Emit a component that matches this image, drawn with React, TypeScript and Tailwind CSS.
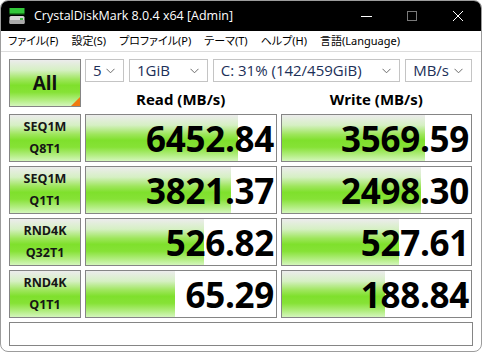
import React from "react";

type Row = { name: [string, string]; read: number; write: number };

const ROWS: Row[] = [
  { name: ["SEQ1M", "Q8T1"], read: 6452.84, write: 3569.59 },
  { name: ["SEQ1M", "Q1T1"], read: 3821.37, write: 2498.3 },
  { name: ["RND4K", "Q32T1"], read: 526.82, write: 527.61 },
  { name: ["RND4K", "Q1T1"], read: 65.29, write: 188.84 },
];

const MENU = ["ファイル(F)", "設定(S)", "プロファイル(P)", "テーマ(T)", "ヘルプ(H)", "言語(Language)"];

const GREEN =
  "linear-gradient(to bottom, #ececec 0%, #d6f0c4 22%, #9ee65c 42%, #7fe02c 55%, #86e236 70%, #b4ee84 88%, #d4f6bc 100%)";

// log scale like CDM: 0.1 .. 100000 MB/s
const ratio = (v: number) => Math.max(0, Math.min(1, (Math.log10(v) + 1) / 6));

function Chevron() {
  return (
    <svg width="9" height="6" viewBox="0 0 9 6" className="shrink-0">
      <path d="M0.5 0.8 L4.5 4.8 L8.5 0.8" fill="none" stroke="#6b6b6b" strokeWidth="1" />
    </svg>
  );
}

function Combo({ label, className }: { label: string; className: string }) {
  return (
    <div
      className={`h-[23px] flex items-center justify-between pl-[7px] pr-[8px] bg-white border border-[#c4c4c4] text-[15px] text-[#1c2f58] ${className}`}
    >
      <span>{label}</span>
      <Chevron />
    </div>
  );
}

function Meter({ value }: { value: number }) {
  return (
    <div className="relative h-[48px] border border-[#858585] bg-white overflow-hidden">
      <div className="absolute left-0 top-0 bottom-0" style={{ width: `${ratio(value) * 100}%`, background: GREEN }} />
      <div className="relative h-full flex items-center justify-end pr-[2px] text-[35px] font-bold leading-none text-black tracking-[-0.3px]">
        {value.toFixed(2)}
      </div>
    </div>
  );
}

function LabelButton({ lines }: { lines: [string, string] }) {
  return (
    <div
      className="h-[48px] border border-[#858585] flex flex-col items-center justify-center text-[12.5px] font-bold leading-[22px] text-[#161616]"
      style={{ background: GREEN }}
    >
      <span>{lines[0]}</span>
      <span>{lines[1]}</span>
    </div>
  );
}

export default function App() {
  return (
    <div
      className="w-[482px] h-[352px] bg-white overflow-hidden rounded-[8px] border border-[#9c9c9c] flex flex-col"
      style={{ fontFamily: '"Open Sans", "Noto Sans", "Noto Sans CJK JP", sans-serif' }}
    >
      {/* title bar */}
      <div className="h-[30px] bg-black flex items-center text-white shrink-0">
        <svg width="16" height="18" viewBox="0 0 16 18" className="ml-[8px] mr-[9px]">
          <rect x="0.5" y="1" width="15" height="5" fill="#33c83a" />
          <rect x="0.5" y="6" width="15" height="1.5" fill="#1a8a20" />
          <rect x="0.5" y="9" width="15" height="8" rx="1.5" fill="#d6d6d6" />
          <rect x="0.5" y="13" width="15" height="4" rx="1" fill="#a9a9a9" />
          <rect x="11" y="11" width="3" height="2" fill="#3fbf3f" />
        </svg>
        <span className="text-[12.5px]">CrystalDiskMark 8.0.4 x64 [Admin]</span>
        <div className="ml-auto flex items-center h-full">
          <div className="w-[46px] h-full flex items-center justify-center">
            <div className="w-[11px] h-px bg-white" />
          </div>
          <div className="w-[46px] h-full flex items-center justify-center">
            <div className="w-[10px] h-[10px] border border-[#7a7a7a]" />
          </div>
          <div className="w-[46px] h-full flex items-center justify-center">
            <svg width="12" height="12" viewBox="0 0 12 12">
              <path d="M1 1 L11 11 M11 1 L1 11" stroke="white" strokeWidth="1" />
            </svg>
          </div>
        </div>
      </div>

      {/* menu */}
      <div
        className="h-[21px] flex items-center gap-[13px] pl-[7px] text-[11px] text-black border-b border-[#dcdcdc] shrink-0"
        style={{ fontFamily: '"Noto Sans", "Noto Sans CJK JP", sans-serif', fontFeatureSettings: '"palt"' }}
      >
        {MENU.map((m) => (
          <span key={m}>{m}</span>
        ))}
      </div>

      {/* body */}
      <div className="flex-1 pt-[7px] pl-[8px] pr-[8px] flex flex-col">
        <div className="grid grid-cols-[72px_192px_191px] gap-x-[4px]">
          <div className="relative h-[48px] border border-[#858585] flex items-center justify-center text-[19px] font-bold text-[#111]" style={{ background: GREEN }}>
            All
            <div
              className="absolute right-0 bottom-0 w-[9px] h-[9px] bg-[#f07a10]"
              style={{ clipPath: "polygon(100% 0, 100% 100%, 0 100%)" }}
            />
          </div>
          <div className="col-span-2 flex flex-col">
            <div className="flex gap-[5px]">
              <Combo label="5" className="w-[39px]" />
              <Combo label="1GiB" className="w-[79px]" />
              <Combo label="C: 31% (142/459GiB)" className="w-[188px]" />
              <Combo label="MB/s" className="w-[67px]" />
            </div>
            <div className="grid grid-cols-2 gap-x-[4px] mt-[7px] text-[15px] font-bold text-black leading-[20px]">
              <div className="text-center">Read (MB/s)</div>
              <div className="text-center">Write (MB/s)</div>
            </div>
          </div>
        </div>

        <div className="grid grid-cols-[72px_192px_191px] gap-x-[4px] gap-y-[4px] mt-[5px]">
          {ROWS.map((r) => (
            <React.Fragment key={r.name.join("")}>
              <LabelButton lines={r.name} />
              <Meter value={r.read} />
              <Meter value={r.write} />
            </React.Fragment>
          ))}
        </div>

        <div className="mt-[4px] h-[24px] border border-[#858585] bg-white" />
      </div>
    </div>
  );
}
